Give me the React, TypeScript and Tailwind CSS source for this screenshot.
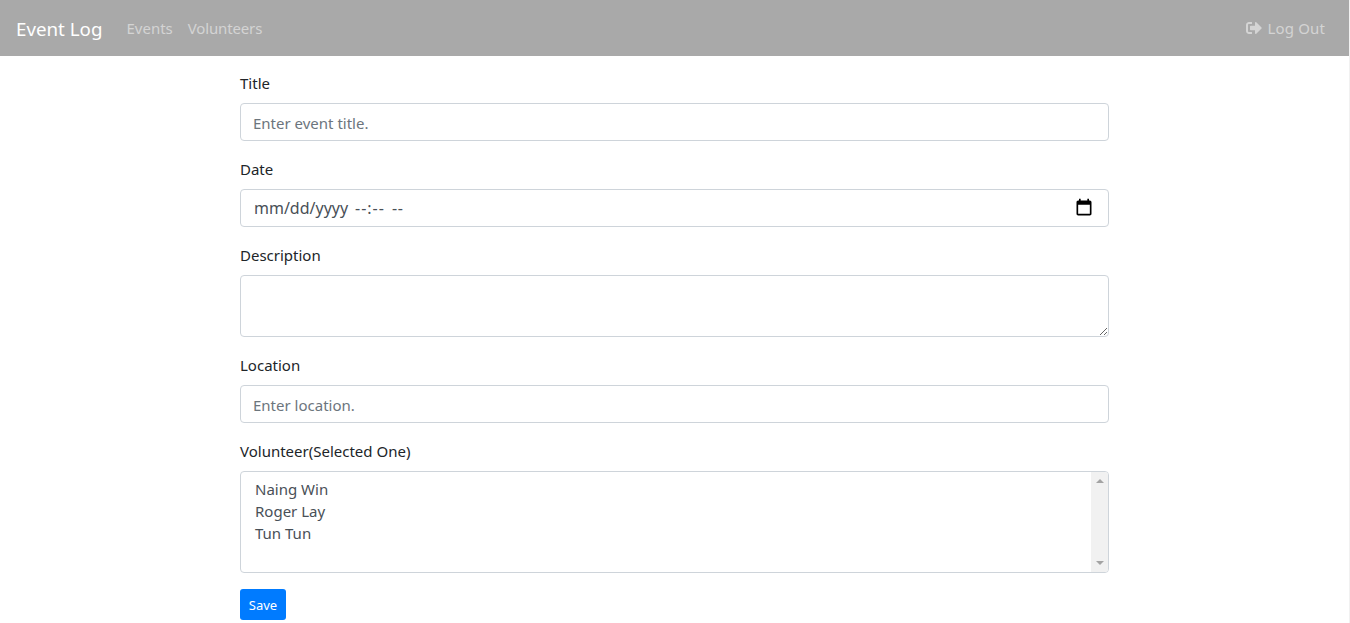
import React from 'react';

const font = "font-['Noto_Sans','Open_Sans',sans-serif]";

const labelClass = 'block mb-2 text-[15px] leading-6 text-[#212529]';
const inputClass =
  'block w-full h-[38px] px-3 pt-[7px] pb-[5px] text-[15px] leading-6 text-[#495057] bg-white border border-[#ced4da] rounded placeholder:text-[#6c757d] placeholder:opacity-100 outline-none';

const LogOutIcon: React.FC = () => (
  <svg viewBox="0 0 512 512" className="w-4 h-4 fill-current">
    <path d="M497 273L329 441c-15 15-41 4.500-41-17v-96H152c-13.300 0-24-10.700-24-24v-96c0-13.300 10.700-24 24-24h136V88c0-21.400 25.900-32 41-17l168 168c9.300 9.400 9.300 24.600 0 34zM192 436v-40c0-6.600-5.400-12-12-12H96c-17.700 0-32-14.300-32-32V160c0-17.700 14.300-32 32-32h84c6.600 0 12-5.400 12-12V76c0-6.600-5.400-12-12-12H96c-53 0-96 43-96 96v192c0 53 43 96 96 96h84c6.600 0 12-5.400 12-12z" />
  </svg>
);

const CalendarIcon: React.FC = () => (
  <svg viewBox="0 0 24 24" className="w-5 h-5 fill-black">
    <path d="M19 3h-1V1h-2v2H8V1H6v2H5c-1.100 0-2 .9-2 2v14c0 1.100.9 2 2 2h14c1.100 0 2-.9 2-2V5c0-1.100-.9-2-2-2zm0 16H5V8h14v11z" />
  </svg>
);

const Navbar: React.FC = () => (
  <nav className="h-14 flex items-center px-4 bg-[#a9a9a9]">
    <a className="mt-0.5 mr-4 text-[18.75px] leading-[30px] text-white">Event Log</a>
    <div className="flex flex-1 items-center text-[15px] leading-6 text-white/50">
      <a className="px-2">Events</a>
      <a className="pl-[7px] pr-2 tracking-[-0.15px]">Volunteers</a>
      <a className="ml-auto px-2 flex items-center gap-[5px] tracking-[0.15px]">
        <LogOutIcon />
        Log Out
      </a>
    </div>
  </nav>
);

const DateField: React.FC = () => (
  <div className="flex items-center h-[38px] pl-[13px] pr-[14px] text-base leading-6 text-[#495057] bg-white border border-[#ced4da] rounded">
    <span className="w-[101px]">mm/dd/yyyy</span>
    <span className="w-[37px] tracking-[1px]">--:--</span>
    <span className="tracking-[0.6px]">--</span>
    <span className="ml-auto">
      <CalendarIcon />
    </span>
  </div>
);

const VolunteerList: React.FC = () => (
  <div className="flex h-[102px] border border-[#ced4da] rounded overflow-hidden text-[15px] leading-[22px] text-[#495057]">
    <div className="flex-1 px-3.5 py-1.5">
      <div>Naing Win</div>
      <div>Roger Lay</div>
      <div>Tun Tun</div>
    </div>
    <div className="w-[17px] bg-[#f1f1f1] flex flex-col items-center justify-between py-[7px]">
      <svg viewBox="0 0 8 4" className="w-2 h-1 fill-[#a3a3a3]">
        <path d="M4 0l4 4H0z" />
      </svg>
      <svg viewBox="0 0 8 4" className="w-2 h-1 fill-[#a3a3a3]">
        <path d="M0 0h8L4 4z" />
      </svg>
    </div>
  </div>
);

export default function App() {
  return (
    <div className={`flex bg-white min-h-[623px] ${font}`}>
      <div className="w-[1349px]">
        <Navbar />
        <form className="w-[869px] ml-[240px] pt-[15px]">
          <div className="mb-4">
            <label className={labelClass}>Title</label>
            <input className={inputClass} placeholder="Enter event title." />
          </div>
          <div className="mb-4">
            <label className={labelClass}>Date</label>
            <DateField />
          </div>
          <div className="mb-4">
            <label className={labelClass}>Description</label>
            <textarea className={`${inputClass} h-[62px]`} />
          </div>
          <div className="mb-4">
            <label className={labelClass}>Location</label>
            <input className={inputClass} placeholder="Enter location." />
          </div>
          <div className="mb-4">
            <label className={labelClass}>Volunteer(Selected One)</label>
            <VolunteerList />
          </div>
          <button type="button" className="block w-[46px] h-[31px] pt-px text-[13px] leading-[21px] text-white bg-[#007bff] rounded-[3px]">
            Save
          </button>
        </form>
      </div>
      <div className="w-px bg-[#f1f1f1]" />
    </div>
  );
}
